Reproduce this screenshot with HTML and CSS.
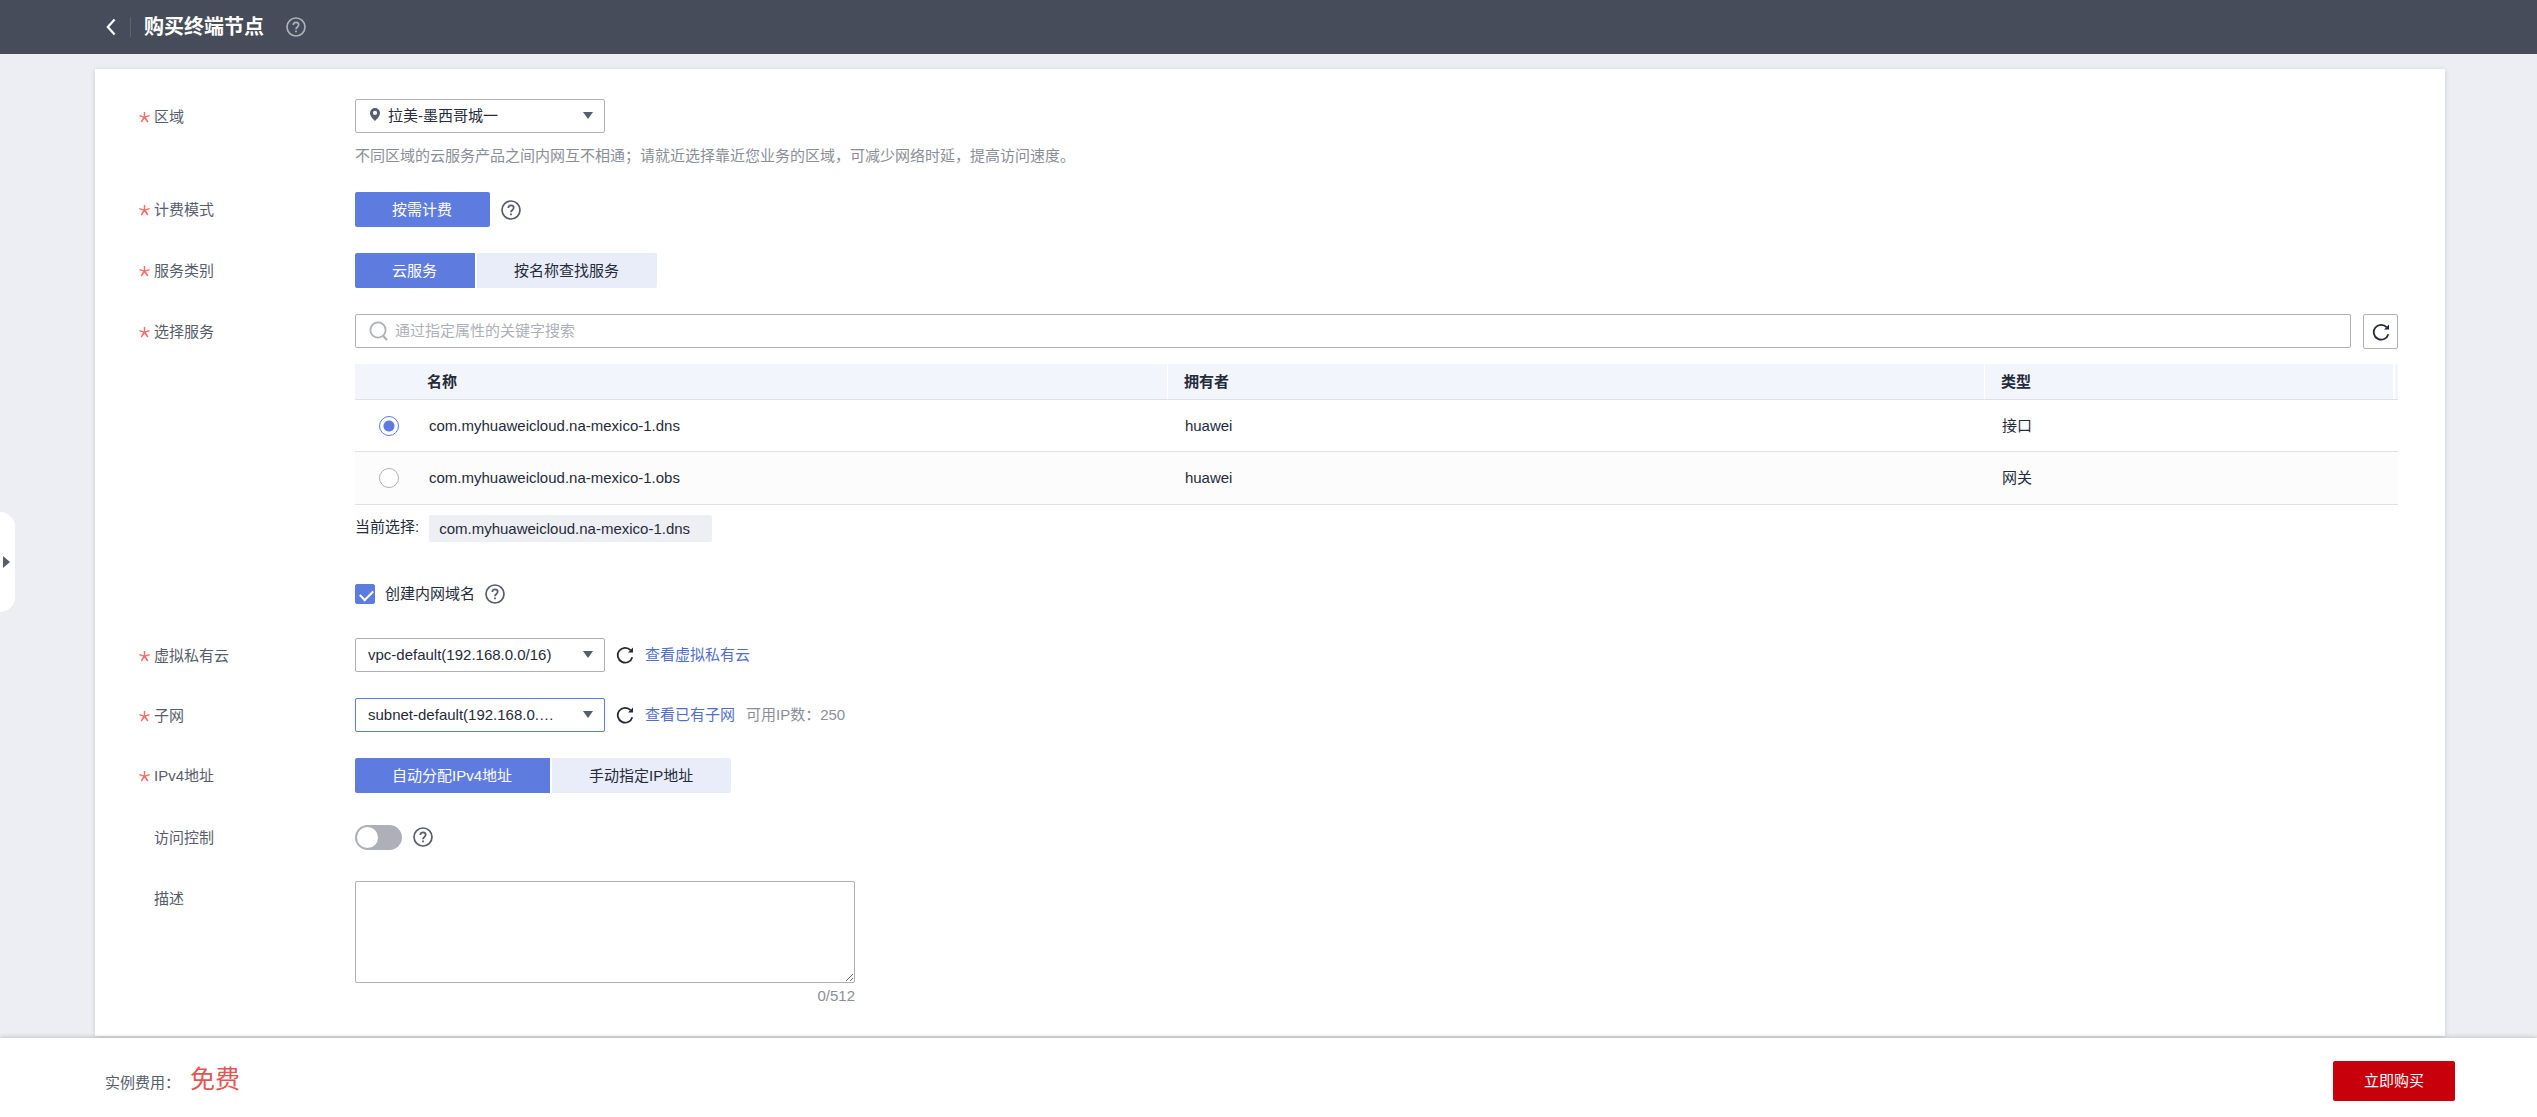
FILE: index.html
```html
<!DOCTYPE html>
<html lang="zh-CN">
<head>
<meta charset="utf-8">
<meta name="viewport" content="width=device-width, initial-scale=1">
<title>购买终端节点</title>
<link rel="stylesheet" href="styles.css">
</head>
<body>
<svg class="sprite" aria-hidden="true">
  <symbol id="help" viewBox="0 0 20 20">
    <circle cx="10" cy="10" r="9" fill="none" stroke="currentColor" stroke-width="1.7"/>
    <path d="M7.3 8.1C7.3 6.4 8.4 5.4 10 5.4s2.7 1 2.7 2.4c0 1.2-.7 1.8-1.500 2.400-.8.6-1.2 1-1.2 2.100" fill="none" stroke="currentColor" stroke-width="1.7"/>
    <path d="M9.1 13.4h1.8v1.8H9.1z" fill="currentColor"/>
  </symbol>
  <symbol id="refresh" viewBox="0 0 18 18">
    <path d="M16.300 11.200A7.400 7.400 0 1 1 14.600 4.200" fill="none" stroke="currentColor" stroke-width="1.8"/>
    <path d="M17 1.500V6.400H12z" fill="currentColor"/>
  </symbol>
</svg>

<header class="topbar">
  <button class="icon-button back" type="button" aria-label="返回">
    <svg width="10" height="18" viewBox="0 0 10 18"><path d="M8.6 1.4 1.8 9l6.8 7.6" fill="none" stroke="currentColor" stroke-width="2.2"/></svg>
  </button>
  <h1 class="title">购买终端节点</h1>
  <button class="icon-button title-help" type="button" aria-label="帮助"><svg class="help-icon"><use href="#help"/></svg></button>
</header>

<button class="drawer-handle" type="button" aria-label="展开"></button>

<main class="main">
  <form class="card" id="order">
    <div class="row">
      <label class="label required" for="region">区域</label>
      <div class="field">
        <div class="select-wrap">
          <svg class="pin" viewBox="0 0 10 13"><path fill-rule="evenodd" d="M5 0a5 5 0 0 1 5 5c0 3-3 6-5 8C3 11 0 8 0 5a5 5 0 0 1 5-5zm0 2.8a2.1 2.1 0 1 0 0 4.2 2.1 2.1 0 0 0 0-4.200z" fill="currentColor"/></svg>
          <select class="select with-pin" id="region"><option>拉美-墨西哥城一</option></select>
        </div>
        <p class="hint">不同区域的云服务产品之间内网互不相通；请就近选择靠近您业务的区域，可减少网络时延，提高访问速度。</p>
      </div>
    </div>

    <div class="row">
      <span class="label required">计费模式</span>
      <div class="field inline">
        <div class="segments"><button class="segment active" type="button">按需计费</button></div>
        <button class="icon-button" type="button" aria-label="计费模式说明"><svg class="help-icon"><use href="#help"/></svg></button>
      </div>
    </div>

    <div class="row">
      <span class="label required">服务类别</span>
      <div class="field">
        <div class="segments">
          <button class="segment active" type="button">云服务</button>
          <button class="segment" type="button">按名称查找服务</button>
        </div>
      </div>
    </div>

    <div class="row">
      <label class="label required" for="search">选择服务</label>
      <div class="field">
        <div class="search-line">
          <div class="search">
            <svg class="search-icon" viewBox="0 0 20 20"><circle cx="9" cy="9" r="7.600" fill="none" stroke="currentColor" stroke-width="1.8"/><path d="M13.800 14.600 18 19" stroke="currentColor" stroke-width="2.2"/></svg>
            <input class="search-input" id="search" type="text" placeholder="通过指定属性的关键字搜索">
          </div>
          <button class="refresh-box" type="button" aria-label="刷新"><svg class="refresh-icon"><use href="#refresh"/></svg></button>
        </div>
        <table class="services">
          <thead>
            <tr><th class="col-pick" aria-label="选择"></th><th class="col-name">名称</th><th class="col-owner">拥有者</th><th class="col-type">类型</th></tr>
          </thead>
          <tbody>
            <tr><td class="pick"><input class="radio" type="radio" name="service" id="dns" checked></td><td><label for="dns">com.myhuaweicloud.na-mexico-1.dns</label></td><td>huawei</td><td>接口</td></tr>
            <tr><td class="pick"><input class="radio" type="radio" name="service" id="obs"></td><td><label for="obs">com.myhuaweicloud.na-mexico-1.obs</label></td><td>huawei</td><td>网关</td></tr>
          </tbody>
        </table>
        <div class="current">
          <span class="current-title">当前选择:</span>
          <span class="tag">com.myhuaweicloud.na-mexico-1.dns</span>
        </div>
        <div class="domain">
          <input class="checkbox" type="checkbox" id="domain" checked>
          <label for="domain">创建内网域名</label>
          <button class="icon-button" type="button" aria-label="内网域名说明"><svg class="help-icon"><use href="#help"/></svg></button>
        </div>
      </div>
    </div>

    <div class="row">
      <label class="label required" for="vpc">虚拟私有云</label>
      <div class="field inline">
        <div class="select-wrap"><select class="select" id="vpc"><option>vpc-default(192.168.0.0/16)</option></select></div>
        <button class="icon-button" type="button" aria-label="刷新"><svg class="refresh-icon"><use href="#refresh"/></svg></button>
        <a class="link" href="#vpc">查看虚拟私有云</a>
      </div>
    </div>

    <div class="row">
      <label class="label required" for="subnet">子网</label>
      <div class="field inline">
        <div class="select-wrap"><select class="select focused" id="subnet"><option>subnet-default(192.168.0.…</option></select></div>
        <button class="icon-button" type="button" aria-label="刷新"><svg class="refresh-icon"><use href="#refresh"/></svg></button>
        <a class="link" href="#subnet">查看已有子网</a>
        <span class="available">可用IP数：250</span>
      </div>
    </div>

    <div class="row">
      <span class="label required">IPv4地址</span>
      <div class="field">
        <div class="segments">
          <button class="segment active" type="button">自动分配IPv4地址</button>
          <button class="segment" type="button">手动指定IP地址</button>
        </div>
      </div>
    </div>

    <div class="row switch-row">
      <label class="label" for="acl">访问控制</label>
      <div class="field inline">
        <input class="switch" type="checkbox" role="switch" id="acl">
        <button class="icon-button" type="button" aria-label="访问控制说明"><svg class="help-icon"><use href="#help"/></svg></button>
      </div>
    </div>

    <div class="row">
      <label class="label" for="desc">描述</label>
      <div class="field description">
        <textarea class="textarea" id="desc" maxlength="512"></textarea>
        <span class="counter">0/512</span>
      </div>
    </div>
  </form>
</main>

<footer class="footer">
  <p class="cost">实例费用：<strong class="price">免费</strong></p>
  <button class="buy" type="submit" form="order">立即购买</button>
</footer>
</body>
</html>
```
FILE: styles.css
```css
* {
  box-sizing: border-box;
}

body {
  margin: 0;
  min-height: 100vh;
  display: flex;
  flex-direction: column;
  background: #edeef4;
  color: #252b3a;
  font: 15px/20px "Liberation Sans", "Noto Sans CJK SC", sans-serif;
}

button,
input,
select,
textarea {
  margin: 0;
  font: inherit;
  color: inherit;
}

button {
  border: 0;
  padding: 0;
  background: none;
  cursor: pointer;
}

svg {
  display: block;
}

.sprite {
  position: absolute;
  width: 0;
  height: 0;
}

.icon-button {
  display: flex;
  align-items: center;
  color: #575d6c;
}

.help-icon {
  width: 20px;
  height: 20px;
}

.refresh-icon {
  width: 18px;
  height: 18px;
  color: #252b3a;
}

/* Top bar */
.topbar {
  display: flex;
  align-items: center;
  height: 54px;
  padding: 0 106px;
  background: #464c59;
  color: #fff;
}

.back {
  height: 20px;
  padding-right: 14px;
  border-right: 1px solid #5d6370;
  color: #fff;
}

.title {
  margin: 0 22px 0 13px;
  font-size: 20px;
  line-height: 30px;
  font-weight: 700;
}

.title-help {
  color: #adb0b8;
}

/* Handle of the collapsed side drawer */
.drawer-handle {
  position: fixed;
  left: 0;
  top: 512px;
  width: 15px;
  height: 100px;
  border-radius: 0 15px 15px 0;
  background: #fff;
}

.drawer-handle::before {
  content: "";
  display: block;
  margin-left: 3px;
  border-left: 7px solid #575d6c;
  border-top: 6px solid transparent;
  border-bottom: 6px solid transparent;
  width: 0;
}

/* Form */
.main {
  flex: 1;
  display: flex;
  padding: 15px 92px 2px 95px;
}

.card {
  flex: 1;
  display: flex;
  flex-direction: column;
  gap: 26px;
  padding: 30px 47px 30px 44px;
  background: #fff;
  box-shadow: 0 1px 5px rgba(0, 0, 0, 0.15);
}

.row {
  display: grid;
  grid-template-columns: 216px minmax(0, 1fr);
}

.label {
  padding-left: 15px;
  line-height: 36px;
  color: #575d6c;
}

.row > .label {
  height: 34px;
}

.required::before {
  content: "";
  display: inline-block;
  width: 11px;
  height: 11px;
  margin: 0 4px 0 -15px;
  vertical-align: -1px;
  background: #f66f6a;
  clip-path: polygon(43% 0, 57% 0, 56% 38%, 95% 27%, 99% 39%, 63% 51%, 86% 87%, 75% 95%, 50% 61%, 26% 95%, 15% 87%, 38% 51%, 1% 39%, 5% 27%, 44% 38%);
}

.inline {
  display: flex;
  align-items: center;
  gap: 11px;
}

.select-wrap {
  position: relative;
  width: 250px;
}

.select-wrap::after {
  content: "";
  position: absolute;
  right: 12px;
  top: 13px;
  border-top: 7px solid #575d6c;
  border-left: 5px solid transparent;
  border-right: 5px solid transparent;
  pointer-events: none;
}

.select {
  display: block;
  appearance: none;
  width: 100%;
  height: 34px;
  padding: 0 30px 0 12px;
  border: 1px solid #adb0b8;
  border-radius: 2px;
  background: #fff;
}

.with-pin {
  padding-left: 32px;
}

.pin {
  position: absolute;
  left: 15px;
  top: 9px;
  width: 10px;
  height: 13px;
  color: #575d6c;
}

.focused {
  border-color: #5e7ce0;
}

.hint {
  margin: 13px 0 0;
  color: #8a8e99;
}

.segments {
  display: flex;
  gap: 2px;
}

.segment {
  height: 35px;
  padding: 0 38px 0 37px;
  background: #e9edfa;
}

.segment:first-child {
  border-radius: 2px 0 0 2px;
}

.segment:last-child {
  border-radius: 0 2px 2px 0;
}

.segment:only-child {
  border-radius: 2px;
}

.active {
  background: #5e7ce0;
  color: #fff;
}

/* Service search and table */
.search-line {
  display: flex;
  align-items: flex-start;
  gap: 12px;
}

.search {
  flex: 1;
  display: flex;
  align-items: center;
  gap: 6px;
  height: 34px;
  padding-left: 13px;
  border: 1px solid #adb0b8;
  border-radius: 2px;
}

.search-icon {
  width: 20px;
  height: 20px;
  color: #adb0b8;
}

.search-input {
  flex: 1;
  border: 0;
  padding: 0;
  outline: 0;
  background: none;
}

.search-input::placeholder {
  color: #adb0b8;
}

.refresh-box {
  display: flex;
  align-items: center;
  justify-content: center;
  width: 35px;
  height: 35px;
  border: 1px solid #adb0b8;
  border-radius: 2px;
}

.services {
  width: 100%;
  margin-top: 15px;
  table-layout: fixed;
  border-collapse: separate;
  border-spacing: 0;
}

.services th {
  height: 36px;
  padding: 0 0 0 16px;
  border-bottom: 1px solid #dfe1e6;
  background: #f2f5fc;
  text-align: left;
  font-weight: 700;
}

.services td {
  height: 52px;
  padding: 0 0 0 17px;
  border-bottom: 1px solid #dfe1e6;
}

.services tr:nth-child(2) td {
  height: 53px;
  background: #fcfcfc;
}

.services .col-pick {
  width: 57px;
}

.services .col-name {
  width: 37%;
  padding-left: 15px;
  box-shadow: inset -1px 0 #fff;
}

.services .col-owner {
  width: 40%;
  box-shadow: inset -1px 0 #fff;
}

.services .col-type {
  background: linear-gradient(to left, #f2f5fc 3px, #fff 3px 5px, #f2f5fc 5px);
}

.services .pick {
  padding-left: 24px;
}

.radio {
  display: block;
  appearance: none;
  width: 20px;
  height: 20px;
  border: 1px solid #adb0b8;
  border-radius: 50%;
  background: #fff;
}

.radio:checked {
  border-color: #5e7ce0;
  background: radial-gradient(circle, #5e7ce0 5px, #fff 6px);
}

.current {
  display: flex;
  align-items: flex-start;
  gap: 10px;
  margin-top: 10px;
}

.current-title {
  line-height: 24px;
}

.tag {
  padding: 4px 22px 3px 10px;
  border-radius: 2px;
  background: #eeeff5;
}

.domain {
  display: flex;
  align-items: center;
  gap: 10px;
  margin: 42px 0 8px;
}

.checkbox {
  appearance: none;
  width: 20px;
  height: 20px;
  border: 1px solid #adb0b8;
  border-radius: 2px;
}

.checkbox:checked {
  border-color: #5e7ce0;
  background: #5e7ce0;
}

.checkbox:checked::before {
  content: "";
  display: block;
  width: 11px;
  height: 6px;
  margin: 5px 4px;
  border: solid #fff;
  border-width: 0 0 2px 2px;
  transform: rotate(-45deg);
}

.link {
  color: #526ecc;
  text-decoration: none;
}

.available {
  color: #8a8e99;
}

.switch-row {
  align-items: center;
  height: 36px;
}

.switch {
  appearance: none;
  width: 47px;
  height: 25px;
  padding: 2px;
  border-radius: 13px;
  background: #adb0b8;
}

.switch::before {
  content: "";
  display: block;
  width: 21px;
  height: 21px;
  border-radius: 50%;
  background: #fff;
}

.description {
  display: flex;
  flex-direction: column;
  width: 500px;
}

.textarea {
  height: 102px;
  padding: 6px 12px;
  border: 1px solid #adb0b8;
  border-radius: 2px;
  background: #fff;
}

.counter {
  margin-top: 3px;
  text-align: right;
  color: #8a8e99;
}

/* Footer */
.footer {
  position: sticky;
  bottom: 0;
  display: flex;
  align-items: center;
  height: 79px;
  padding: 7px 82px 0 105px;
  background: #fff;
  box-shadow: 0 -1px 4px rgba(0, 0, 0, 0.18);
  color: #575d6c;
}

.cost {
  margin: 0;
  line-height: 36px;
}

.price {
  margin-left: 10px;
  font-size: 25px;
  font-weight: 400;
  color: #e35452;
}

.buy {
  width: 122px;
  height: 40px;
  margin-left: auto;
  border-radius: 2px;
  background: #c7000b;
  color: #fff;
}
```
